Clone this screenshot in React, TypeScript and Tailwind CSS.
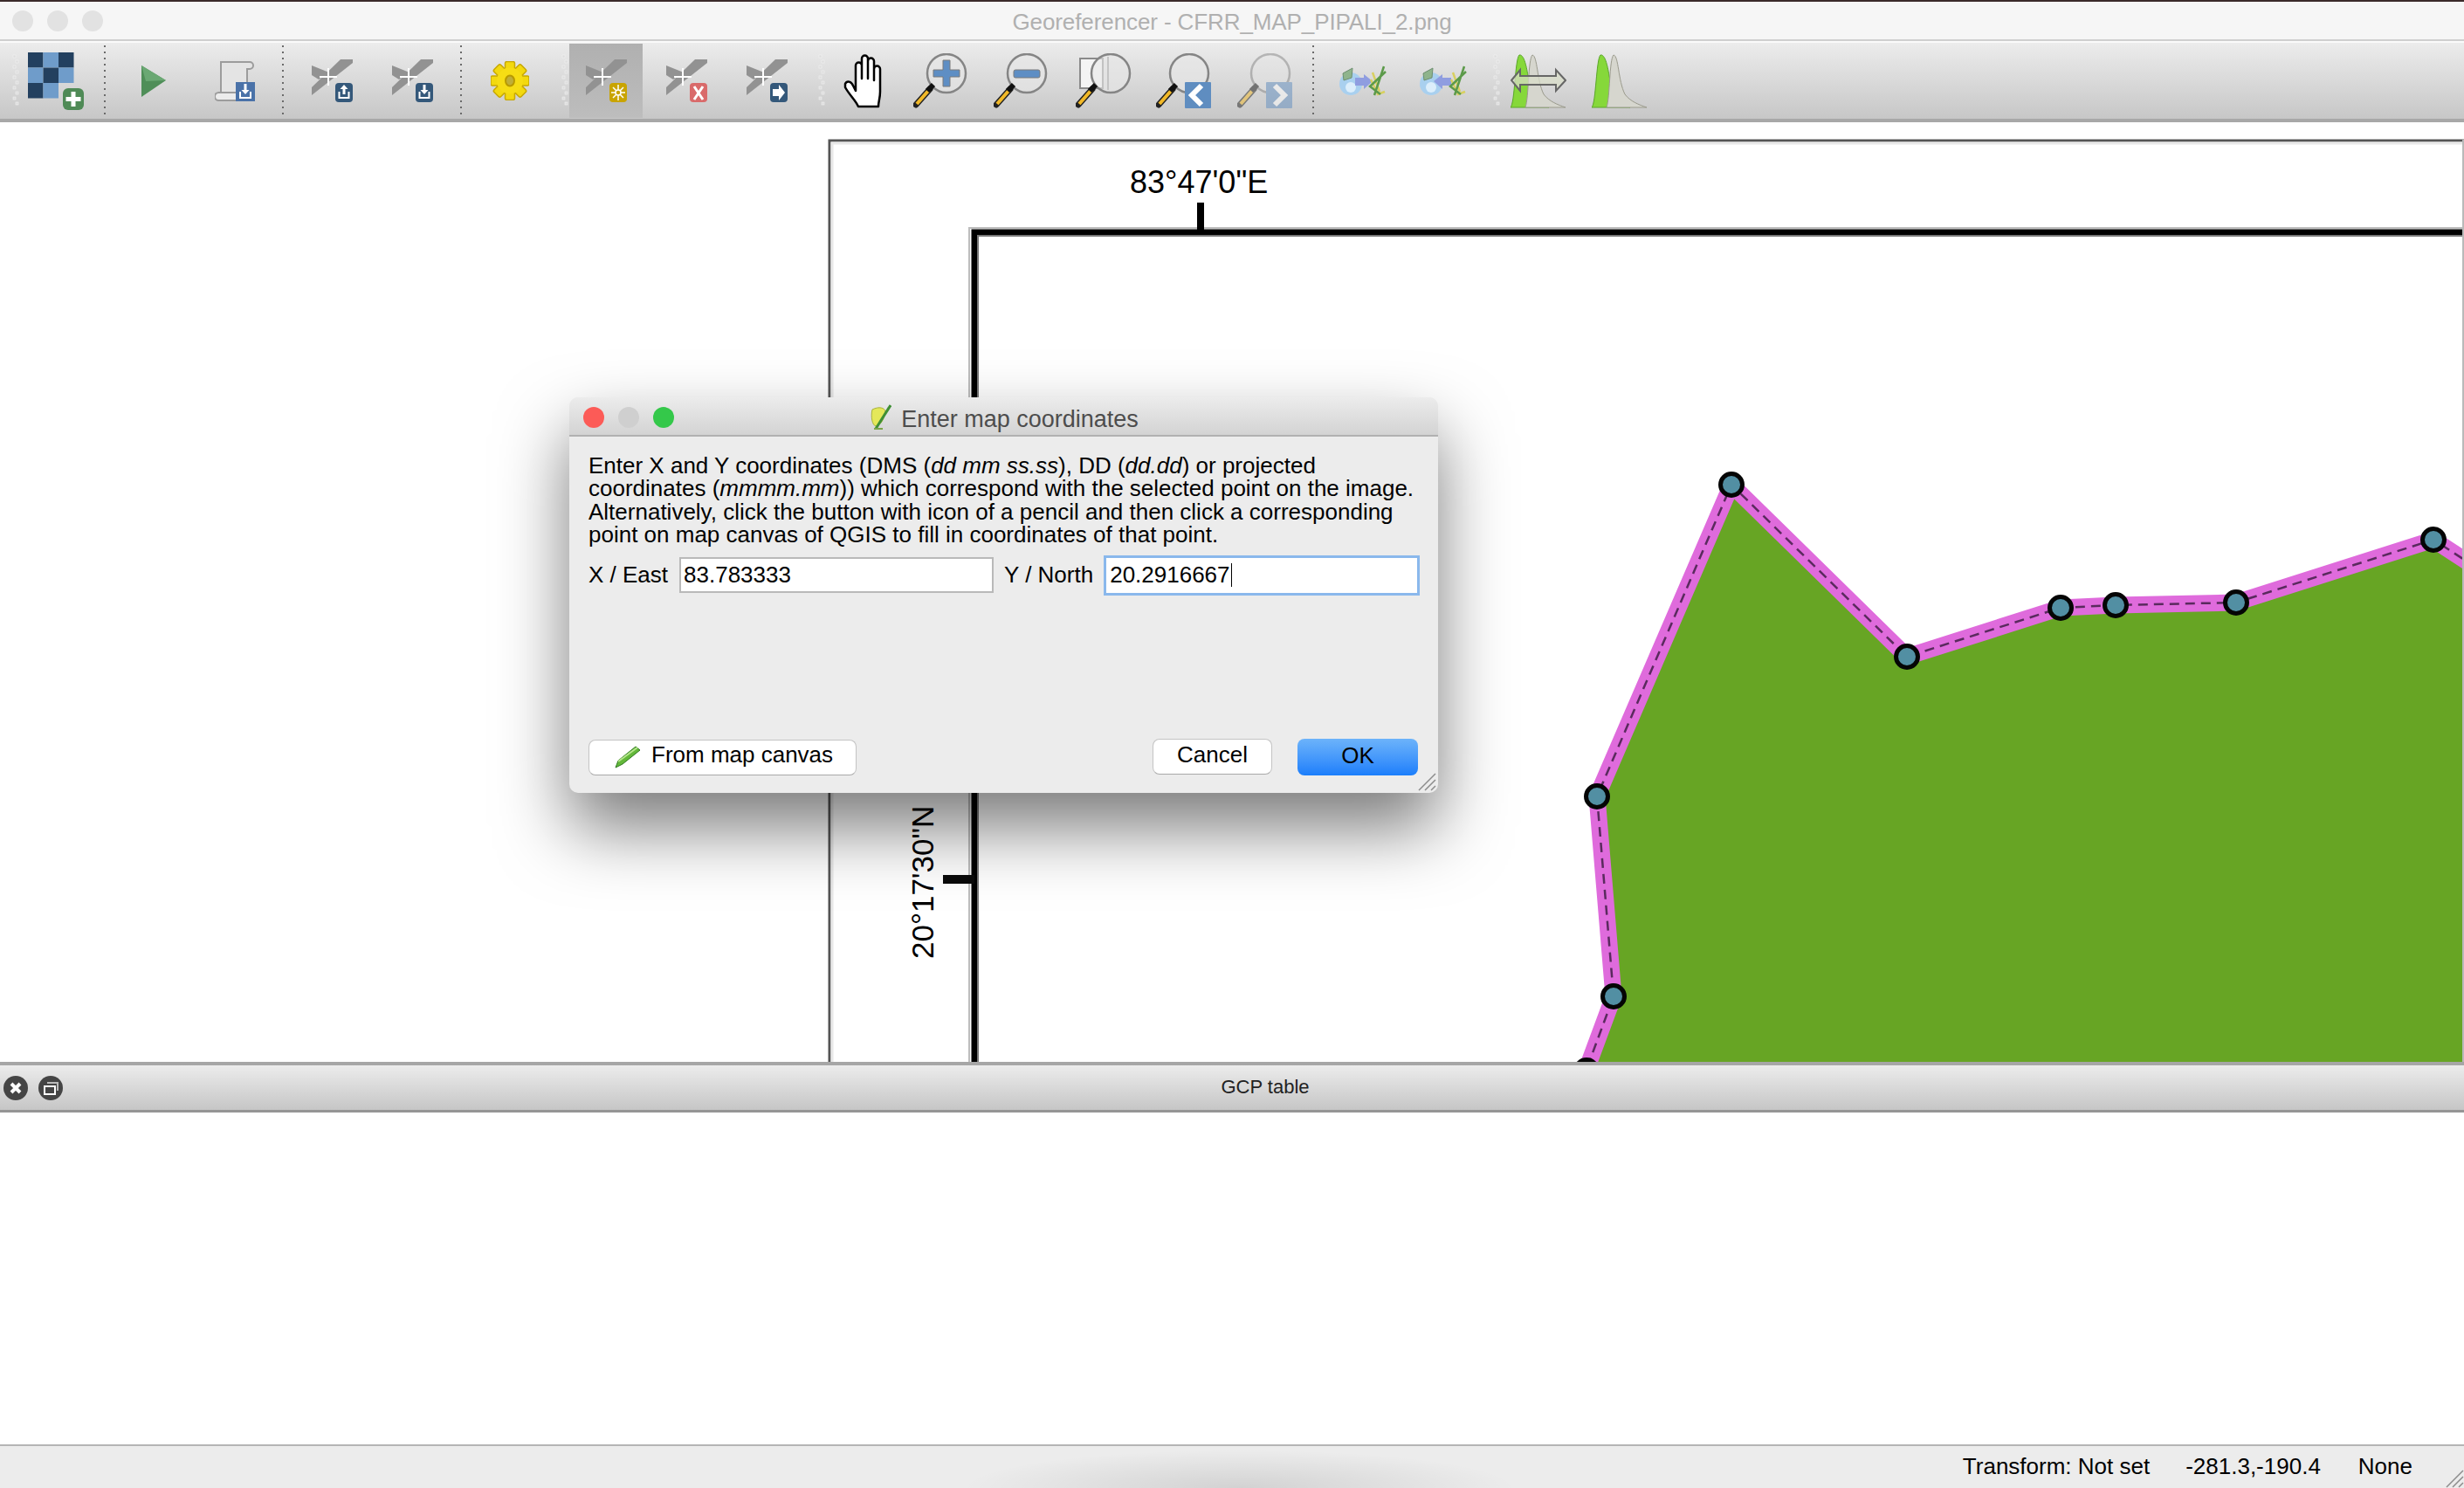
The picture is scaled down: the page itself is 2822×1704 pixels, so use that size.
import type { ReactNode } from "react";

const sans = "font-['Liberation_Sans',Arial,sans-serif]";

const outline =
  "1818,1222 1848,1141 1829,912 1983,555 2184,752 2360,696 2423,693 2561,690 2787,618 2830,646";
const nodes = [
  [1817, 1226],
  [1848, 1141],
  [1829, 912],
  [1983, 555],
  [2184, 752],
  [2360, 696],
  [2423, 693],
  [2561, 690],
  [2787, 618],
];

function Grip({ className = "" }: { className?: string }) {
  return (
    <svg width="8" height="64" className={className}>
      {Array.from({ length: 10 }).map((_, i) => (
        <rect key={i} x={i % 2 ? 4 : 1} y={i * 6 + 2} width="3" height="3" fill="#dcdcdc" stroke="#f6f6f6" strokeWidth="0.5" />
      ))}
    </svg>
  );
}

function Sep({ className = "" }: { className?: string }) {
  return <div className={`h-[82px] w-[2px] bg-[repeating-linear-gradient(to_bottom,#6a6a6a_0_2px,transparent_2px_7px)] ${className}`} />;
}

function Tool({ children, className = "" }: { children: ReactNode; className?: string }) {
  return <div className={`flex h-[85px] w-[84px] shrink-0 items-center justify-center ${className}`}>{children}</div>;
}

function GridIcon() {
  const dark = "#23405f";
  const light = "#6f9cca";
  const cells = [
    [dark, light, dark],
    [light, dark, light],
    [dark, light, ""],
  ];
  return (
    <svg width="64" height="66" viewBox="0 0 64 66">
      {cells.map((row, r) =>
        row.map((c, i) => (c ? <rect key={`${r}-${i}`} x={i * 17.5} y={r * 17.5} width="17.5" height="17.5" fill={c} /> : null)),
      )}
      <rect x="40" y="41" width="24" height="25" rx="6" fill="#4f8a56" />
      <path d="M49.500 45h5v6h6v5h-6v6h-5v-6h-6v-5h6z" fill="#fff" />
    </svg>
  );
}

function PlayIcon() {
  return (
    <svg width="28" height="36" viewBox="0 0 28 36">
      <path d="M0 0L28 17L0 36Z" fill="#4f8e58" />
      <path d="M0 0L28 17L5 18Z" fill="#6aa873" />
    </svg>
  );
}

function ScrollIcon() {
  return (
    <svg width="46" height="47" viewBox="0 0 46 47">
      <path d="M7 2H40a4 4 0 0 1 0 8H37V42H7Z" fill="#e4e4e4" stroke="#9c9c9c" strokeWidth="2" />
      <rect x="0" y="37" width="32" height="9" rx="4.500" fill="#ececec" stroke="#9c9c9c" strokeWidth="2" />
      <rect x="24" y="25" width="22" height="22" fill="#4a72a8" />
      <path d="M33.500 27h3v7h3l-4.500 5-4.500-5h3z" fill="#fff" />
      <path d="M29 36v7h12v-7" fill="none" stroke="#fff" strokeWidth="2" />
    </svg>
  );
}

function GcpIcon({ badge }: { badge: "up" | "down" | "add" | "del" | "move" }) {
  const fill = badge === "add" ? "#c9a400" : badge === "del" ? "#d96a6a" : "#34587a";
  return (
    <svg width="47" height="49" viewBox="0 0 47 49">
      <path d="M33 0H47V4L0 41V32Z" fill="#929292" />
      <path d="M0 7L20 15L8 23L0 18Z" fill="#929292" />
      <path d="M19 10V30M9 20H29" stroke="#fff" strokeWidth="2" />
      <rect x="27" y="27" width="20" height="22" rx="4" fill={fill} />
      {badge === "up" && (
        <>
          <path d="M37 29l-4.500 5h3v6h3v-6h3z" fill="#fff" />
          <path d="M31.500 37v7h11v-7" fill="none" stroke="#fff" strokeWidth="2" />
        </>
      )}
      {badge === "down" && (
        <>
          <path d="M35.500 29h3v6h3l-4.500 5-4.500-5h3z" fill="#fff" />
          <path d="M31.500 37v7h11v-7" fill="none" stroke="#fff" strokeWidth="2" />
        </>
      )}
      {badge === "add" && (
        <>
          <path d="M37 29V47M29 38H45M31 32L43 44M43 32L31 44" stroke="#fff" strokeWidth="1.500" />
          <circle cx="37" cy="38" r="3" fill="#c9a400" stroke="#fff" strokeWidth="1.500" />
        </>
      )}
      {badge === "del" && <path d="M32 31L42 46M42 31L32 46" stroke="#fff" strokeWidth="3" />}
      {badge === "move" && <path d="M30 34h7v-5l7 9-7 9v-5h-7z" fill="#fff" />}
    </svg>
  );
}

function GearIcon() {
  return (
    <svg width="44" height="45" viewBox="-22 -22.500 44 45">
      {[0, 45, 90, 135].map((a) => (
        <rect key={a} x="-5.500" y="-22" width="11" height="44" rx="2" fill="#f3d90f" stroke="#c8a800" strokeWidth="1.500" transform={`rotate(${a})`} />
      ))}
      <circle r="15" fill="#f6dd14" />
      <ellipse rx="5" ry="6" fill="#bfae3a" stroke="#b89a00" strokeWidth="2" />
    </svg>
  );
}

function HandIcon() {
  return (
    <svg width="50" height="63" viewBox="0 0 50 63">
      <path
        d="M3 35C5 31 10 32 12 37L15 43V14a3.500 3.500 0 0 1 7 0V29V6a3.500 3.500 0 0 1 7 0V29V9a3.500 3.500 0 0 1 7 0V31V18a3.500 3.500 0 0 1 7 0V44C43 52 41 55 41 61H18C15 54 8 48 3 39Z"
        fill="#fff"
        stroke="#000"
        strokeWidth="2.500"
        strokeLinejoin="round"
      />
    </svg>
  );
}

function Lens({ kind }: { kind: "in" | "out" | "full" | "last" | "next" }) {
  const cx = kind === "full" ? 40 : 38;
  return (
    <svg width="64" height="64" viewBox="0 0 64 64" className={kind === "next" ? "opacity-50" : ""}>
      {kind === "full" && <rect x="5" y="6" width="26" height="34" fill="#f4f4f4" stroke="#8a8a8a" strokeWidth="2" />}
      <circle cx={cx} cy="23" r="22" fill="#e8e8e8" fillOpacity="0.6" stroke="#858585" strokeWidth="2.500" />
      {kind === "full" && <path d="M37 4V42" stroke="#c4c4c4" strokeWidth="2" />}
      <path d="M19 41L3 59" stroke="#222" strokeWidth="7" strokeLinecap="round" />
      <path d="M18 42L4 58" stroke="#f2b928" strokeWidth="4" />
      <path d="M23 36L16 43" stroke="#111" strokeWidth="6" />
      {kind === "in" && <path d="M34 8h8v11h11v8H42v11h-8V27H23v-8h11z" fill="#5e8ec4" stroke="#7a7a7a" />}
      {kind === "out" && <rect x="23" y="19" width="30" height="9" rx="2" fill="#5e8ec4" stroke="#7a7a7a" />}
      {kind === "last" && (
        <>
          <rect x="33" y="33" width="30" height="30" rx="1" fill="#5f8dc0" />
          <path d="M52 37L41 48L52 59" fill="none" stroke="#fff" strokeWidth="6" />
        </>
      )}
      {kind === "next" && (
        <>
          <rect x="33" y="33" width="30" height="30" rx="1" fill="#5f8dc0" />
          <path d="M43 37L54 48L43 59" fill="none" stroke="#fff" strokeWidth="6" />
        </>
      )}
    </svg>
  );
}

function LinkIcon({ back }: { back?: boolean }) {
  return (
    <svg width="54" height="36" viewBox="0 0 54 36">
      <circle cx="13" cy="21" r="13" fill="#a9d0ef" />
      <circle cx="13" cy="25" r="6" fill="#dceefb" />
      <path d="M4 9L15 3L14 14L5 17Z" fill="#8fb48c" stroke="#6d8f70" />
      <path d={back ? "M16 18L26 10V14H36V23H26V27Z" : "M18 14H28V10L38 18L28 27V23H18Z"} fill="#8f9de0" />
      <path d="M36 16L44 33L52 30M38 8L46 30" fill="none" stroke="#d8d060" strokeWidth="2.500" />
      <path d="M40 34L51 1M47 33L35 24L53 7" fill="none" stroke="#5c9a4a" strokeWidth="2.500" />
    </svg>
  );
}

function HistIcon({ arrow }: { arrow?: boolean }) {
  return (
    <svg width="64" height="62" viewBox="0 0 64 62">
      <path d="M0 61C5 56 5 6 10 1C15 0 18 12 20 25C24 46 32 56 44 61Z" fill="#86d83a" stroke="#5aa52a" />
      <path d="M17 61C21 50 20 6 25 1C31 2 30 30 38 46C44 54 54 58 63 61Z" fill="#d6d6ce" stroke="#9a9a8c" />
      {arrow && <path d="M1 30L11 18V25H52V18L63 30L52 42V35H11V42Z" fill="#d8dcc8" fillOpacity="0.75" stroke="#666" strokeWidth="2" />}
    </svg>
  );
}

function Toolbar() {
  return (
    <div className="flex h-[93px] shrink-0 items-center border-b-4 border-t-2 border-b-[#a8a8a8] border-t-[#fafafa] bg-gradient-to-b from-[#ececec] to-[#c7c7c7] pl-[14px]">
      <Grip />
      <Tool><GridIcon /></Tool>
      <Sep className="ml-[13px]" />
      <Tool className="ml-[13px]"><PlayIcon /></Tool>
      <Tool className="ml-[9px]"><ScrollIcon /></Tool>
      <Sep className="ml-[12px]" />
      <Tool className="ml-[13px]"><GcpIcon badge="up" /></Tool>
      <Tool className="ml-[8px]"><GcpIcon badge="down" /></Tool>
      <Sep className="ml-[13px]" />
      <Tool className="ml-[13px]"><GearIcon /></Tool>
      <Grip className="ml-[17px]" />
      <Tool className="ml-[1px] bg-gradient-to-b from-[#b0b0b0] to-[#bdbdbd]"><GcpIcon badge="add" /></Tool>
      <Tool className="ml-[8px]"><GcpIcon badge="del" /></Tool>
      <Tool className="ml-[8px]"><GcpIcon badge="move" /></Tool>
      <Grip className="ml-[17px]" />
      <Tool className="ml-[3px]"><HandIcon /></Tool>
      <Tool className="ml-[4px]"><Lens kind="in" /></Tool>
      <Tool className="ml-[8px]"><Lens kind="out" /></Tool>
      <Tool className="ml-[10px]"><Lens kind="full" /></Tool>
      <Tool className="ml-[8px]"><Lens kind="last" /></Tool>
      <Tool className="ml-[9px]"><Lens kind="next" /></Tool>
      <Sep className="ml-[12px]" />
      <Tool className="ml-[14px]"><LinkIcon /></Tool>
      <Tool className="ml-[8px]"><LinkIcon back /></Tool>
      <Grip className="ml-[15px]" />
      <Tool className="ml-[2px]"><HistIcon arrow /></Tool>
      <Tool className="ml-[9px]"><HistIcon /></Tool>
    </div>
  );
}

function MapCanvas() {
  return (
    <div className="relative min-h-0 flex-1 overflow-hidden bg-white">
      <svg className="absolute inset-0" width="2822" height="1076" viewBox="0 140 2822 1076">
        <path d="M950 1216V161H2822" fill="none" stroke="#555" strokeWidth="3" />
        <path d="M953 1216V164H2820" fill="none" stroke="#e8e8e8" strokeWidth="3" />
        <path d="M1116 1216V266H2822" fill="none" stroke="#000" strokeWidth="7" />
        <path d="M1110 1216V261H2822" fill="none" stroke="#bdbdbd" strokeWidth="2" />
        <path d="M1120 1216V270H2822" fill="none" stroke="#777" strokeWidth="2" />
        <rect x="1371" y="232" width="8" height="36" fill="#000" />
        <rect x="1080" y="1002" width="36" height="10" fill="#0a0a0a" />
        <text x="1294" y="221" fontFamily="Liberation Sans" fontSize="36" fill="#000">
          83°47'0"E
        </text>
        <text transform="translate(1069 1098) rotate(-90)" fontFamily="Liberation Sans" fontSize="35" fill="#000">
          20°17'30"N
        </text>
        <polygon points={`${outline} 2830,1300 1790,1300`} fill="#67a524" />
        <polyline points={outline} fill="none" stroke="#df6bdc" strokeWidth="19" strokeLinejoin="round" />
        <polyline points={outline} fill="none" stroke="#5a2a5e" strokeWidth="2.500" strokeDasharray="11 7" />
        {nodes.map(([x, y]) => (
          <circle key={`${x}-${y}`} cx={x} cy={y} r="12.500" fill="#528fa3" stroke="#050505" strokeWidth="5" />
        ))}
        <rect x="2820" y="160" width="2" height="1056" fill="#b9b9b9" />
      </svg>
    </div>
  );
}

function ResizeGrip() {
  return (
    <svg width="22" height="22" viewBox="0 0 22 22">
      <path d="M2 21L21 2M9 21L21 9M16 21L21 16" stroke="#8c8c8c" strokeWidth="1.500" />
    </svg>
  );
}

function Dialog() {
  return (
    <div className="absolute left-[652px] top-[455px] flex h-[453px] w-[995px] flex-col rounded-[10px] bg-[#ececec] text-[26px] text-black shadow-[0_40px_80px_rgba(0,0,0,0.52)]">
      <div className="grid h-[45px] shrink-0 grid-cols-[1fr_auto_1fr] items-center rounded-t-[10px] border-b-2 border-[#b1b1b1] bg-gradient-to-b from-[#ececec] to-[#d3d3d3] px-[16px]">
        <div className="flex gap-[16px]">
          <span className="h-[24px] w-[24px] rounded-full bg-[#fc5b57]" />
          <span className="h-[24px] w-[24px] rounded-full bg-[#cfcfcf]" />
          <span className="h-[24px] w-[24px] rounded-full bg-[#34c84a]" />
        </div>
        <div className="flex items-center gap-[11px] text-[27px] text-[#4d4d4d]">
          <svg width="26" height="30" viewBox="0 0 26 30">
            <path d="M4 6C12 2 18 4 19 8C18 16 14 24 8 25C4 24 2 14 4 6Z" fill="#e4e85a" stroke="#a9b43a" />
            <path d="M8 28L25 1" stroke="#3f8f35" strokeWidth="3" />
            <path d="M6 28L16 28" stroke="#7aa54a" strokeWidth="2" />
          </svg>
          <span className="pt-[5px]">Enter map coordinates</span>
        </div>
        <div />
      </div>
      <div className="flex min-h-0 flex-1 flex-col pb-[20px] pl-[22px] pr-[23px] pt-[20px]">
        <p className="leading-[26.300px]">
          Enter X and Y coordinates (DMS (<i>dd mm ss.ss</i>), DD (<i>dd.dd</i>) or projected
          <br />
          coordinates (<i>mmmm.mm</i>)) which correspond with the selected point on the image.
          <br />
          Alternatively, click the button with icon of a pencil and then click a corresponding
          <br />
          point on map canvas of QGIS to fill in coordinates of that point.
        </p>
        <div className="mt-[13px] flex items-center whitespace-nowrap">
          <span>X / East</span>
          <div className="ml-[13px] flex h-[41px] w-[360px] shrink-0 items-center border-2 border-[#b9b9b9] bg-white pl-[3px]">83.783333</div>
          <span className="ml-[12px]">Y / North</span>
          <div className="ml-[15px] flex h-[40px] w-[356px] shrink-0 items-center bg-white pl-[4px] outline-[3px] outline-[#8ab8ec]">
            20.2916667
            <span className="ml-[1px] h-[27px] w-[1.500px] bg-black" />
          </div>
        </div>
        <div className="mt-auto flex items-center justify-between">
          <div className="flex h-[41px] w-[307px] items-center rounded-[8px] border border-[#c4c4c4] border-b-[#a9a9a9] bg-white pb-[6px] pl-[28px]">
            <svg width="32" height="26" viewBox="0 0 32 26" className="mt-[6px]">
              <path d="M2 25L5 17L25 1L30 5L10 21Z" fill="#63b83a" stroke="#2f7a20" />
              <path d="M5 18L27 2" stroke="#b5e58c" strokeWidth="2" />
            </svg>
            <span className="ml-[11px]">From map canvas</span>
          </div>
          <div className="flex gap-[29px]">
            <div className="flex h-[41px] w-[137px] items-center justify-center rounded-[8px] border border-[#c4c4c4] border-b-[#a9a9a9] bg-white pb-[4px]">Cancel</div>
            <div className="flex h-[42px] w-[138px] items-center justify-center rounded-[8px] bg-gradient-to-b from-[#6cb3fa] to-[#1a7efb] pb-[4px]">OK</div>
          </div>
        </div>
      </div>
      <div className="absolute bottom-[2px] right-[2px]">
        <ResizeGrip />
      </div>
    </div>
  );
}

export default function App() {
  return (
    <div className={`relative flex h-[1704px] w-[2822px] flex-col overflow-hidden bg-white ${sans}`}>
      <div className="grid h-[47px] shrink-0 grid-cols-[1fr_auto_1fr] items-center border-b-2 border-t-2 border-b-[#cfcfcf] border-t-[#3b2a2a] bg-[#f6f6f6] px-[14px] text-[26px] text-[#b0b0b0]">
        <div className="flex gap-[16px]">
          <span className="h-[24px] w-[24px] rounded-full bg-[#e2e2e2]" />
          <span className="h-[24px] w-[24px] rounded-full bg-[#e2e2e2]" />
          <span className="h-[24px] w-[24px] rounded-full bg-[#e2e2e2]" />
        </div>
        <div className="pt-[3px] tracking-[-0.1px]">Georeferencer - CFRR_MAP_PIPALI_2.png</div>
        <div />
      </div>
      <Toolbar />
      <MapCanvas />
      <div className="flex h-[58px] shrink-0 items-center border-b-[3px] border-t-4 border-b-[#959595] border-t-[#a6a6a6] bg-gradient-to-b from-[#ececec] to-[#c6c6c6] text-[22px] text-[#222]">
        <div className="flex w-[76px] shrink-0 gap-[12px] pl-[4px]">
          <svg width="28" height="28" viewBox="0 0 28 28">
            <circle cx="14" cy="14" r="14" fill="#454545" />
            <path d="M9 9L19 19M19 9L9 19" stroke="#fff" strokeWidth="4" />
          </svg>
          <svg width="28" height="28" viewBox="0 0 28 28">
            <circle cx="14" cy="14" r="14" fill="#454545" />
            <path d="M10 8H22V17" fill="none" stroke="#bbb" strokeWidth="2" />
            <rect x="7" y="12" width="12" height="9" fill="none" stroke="#fff" strokeWidth="2" />
          </svg>
        </div>
        <div className="flex-1 pb-[2px] text-center">GCP table</div>
      </div>
      <div className="h-[380px] shrink-0 bg-white" />
      <div className="relative flex h-[50px] shrink-0 items-center justify-end border-t-2 border-[#b5b5b5] bg-[#ececec] pb-[1px] pr-[59px] text-[26px] text-black">
        <div className="pointer-events-none absolute bottom-0 left-[1100px] h-[44px] w-[640px] bg-[radial-gradient(ellipse_at_50%_100%,rgba(0,0,0,0.11),transparent_70%)]" />
        <span>Transform: Not set</span>
        <span className="ml-[41px]">-281.3,-190.4</span>
        <span className="ml-[43px]">None</span>
        <div className="absolute bottom-0 right-0">
          <ResizeGrip />
        </div>
      </div>
      <Dialog />
    </div>
  );
}
